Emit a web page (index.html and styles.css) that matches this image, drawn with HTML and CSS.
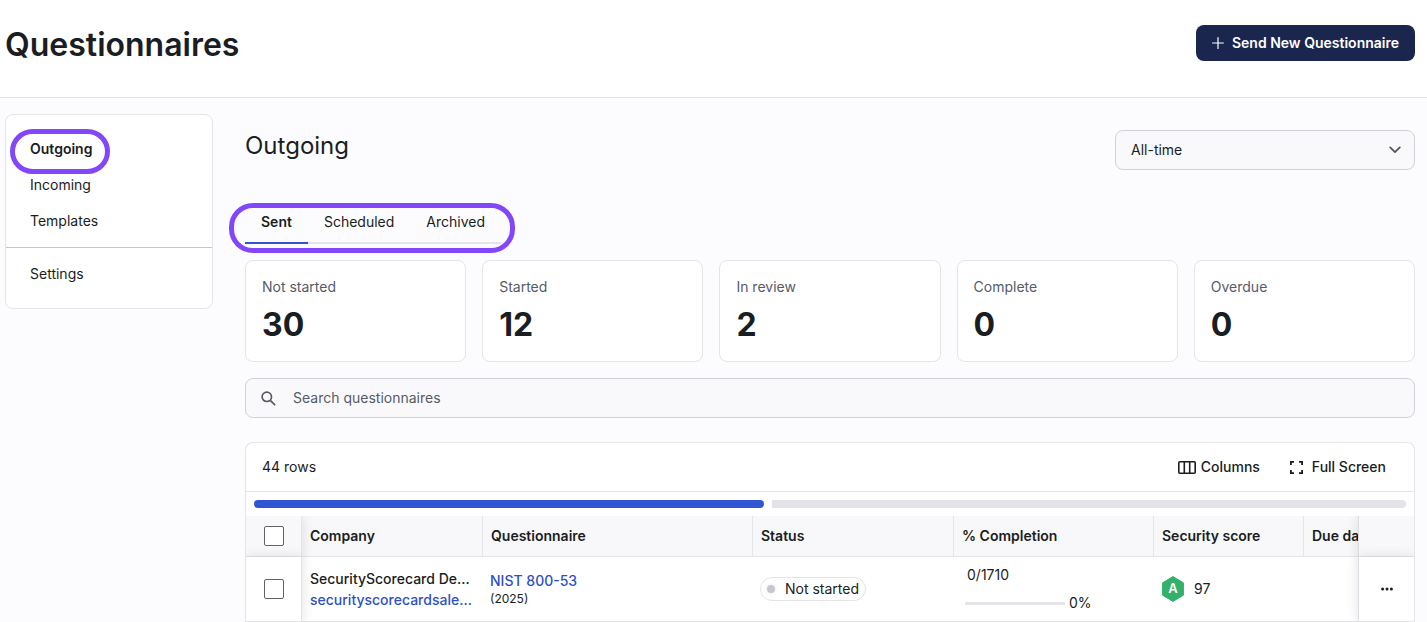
FILE: index.html
```
<!DOCTYPE html>
<html lang="en">
<head>
    <meta charset="UTF-8">
    <meta name="viewport" content="width=device-width, initial-scale=1.0">
    <title>Questionnaires</title>
    <link rel="stylesheet" href="styles.css">
</head>
<body>
    <header class="page-header">
        <h1>Questionnaires</h1>
        <button type="button" class="primary-button">
            <svg width="12" height="12" viewBox="0 0 12 12" fill="none" stroke="currentColor" stroke-width="1.2" stroke-linecap="round" aria-hidden="true"><path d="M6 .6v10.8M.6 6h10.8"/></svg>
            Send New Questionnaire
        </button>
    </header>

    <div class="layout">
        <nav class="sidebar" aria-label="Questionnaires">
            <div class="sidebar-group">
                <a href="#outgoing" class="active">Outgoing<span class="ring ring-link"></span></a>
                <a href="#incoming">Incoming</a>
                <a href="#templates">Templates</a>
            </div>
            <div class="sidebar-group">
                <a href="#settings">Settings</a>
            </div>
        </nav>

        <main class="content">
            <div class="content-header">
                <h2>Outgoing</h2>
                <div class="select-box">
                    <select aria-label="Time range">
                        <option>All-time</option>
                    </select>
                    <svg width="12" height="8" viewBox="0 0 12 8" fill="none" stroke="currentColor" stroke-width="1.7" stroke-linecap="round" stroke-linejoin="round" aria-hidden="true"><path d="M1.2 1.4 6 6.2l4.8-4.8"/></svg>
                </div>
            </div>

            <div class="tabs" role="tablist">
                <button type="button" role="tab" aria-selected="true" class="tab active">Sent</button>
                <button type="button" role="tab" aria-selected="false" class="tab">Scheduled</button>
                <button type="button" role="tab" aria-selected="false" class="tab">Archived</button>
                <span class="ring ring-tabs"></span>
            </div>

            <div class="stats">
                <div class="stat"><span>Not started</span><strong>30</strong></div>
                <div class="stat"><span>Started</span><strong>12</strong></div>
                <div class="stat"><span>In review</span><strong>2</strong></div>
                <div class="stat"><span>Complete</span><strong>0</strong></div>
                <div class="stat"><span>Overdue</span><strong>0</strong></div>
            </div>

            <div class="search">
                <svg width="15" height="15" viewBox="0 0 15 15" fill="none" stroke="currentColor" stroke-width="1.7" aria-hidden="true"><circle cx="5.8" cy="5.8" r="4.7"/><path d="m9.3 9.3 4.8 4.8"/></svg>
                <input type="text" placeholder="Search questionnaires" aria-label="Search questionnaires">
            </div>

            <section class="table-card">
                <div class="toolbar">
                    <span>44 rows</span>
                    <div class="toolbar-actions">
                        <button type="button">
                            <svg width="18" height="13" viewBox="0 0 18 13" fill="none" stroke="currentColor" stroke-width="1.6" aria-hidden="true"><rect x=".8" y=".8" width="16.4" height="11.4" rx="1"/><path d="M6.3 1v11M11.7 1v11"/></svg>
                            Columns
                        </button>
                        <button type="button" class="full-screen">
                            <svg width="13" height="13" viewBox="0 0 13 13" fill="none" stroke="currentColor" stroke-width="1.8" aria-hidden="true"><path d="M.9 4V.9H4M9 .9h3.1V4M12.1 9v3.1H9M4 12.1H.9V9"/></svg>
                            Full Screen
                        </button>
                    </div>
                </div>

                <div class="scroll-track">
                    <div class="scroll-thumb"></div>
                    <div class="scroll-rest"></div>
                </div>

                <div class="table-scroll">
                    <table>
                        <colgroup>
                            <col class="col-check">
                            <col class="col-company">
                            <col class="col-questionnaire">
                            <col class="col-status">
                            <col class="col-completion">
                            <col class="col-score">
                            <col class="col-due">
                            <col class="col-menu">
                        </colgroup>
                        <thead>
                            <tr>
                                <th class="sticky-left"><input type="checkbox" aria-label="Select all rows"></th>
                                <th>Company</th>
                                <th>Questionnaire</th>
                                <th>Status</th>
                                <th>% Completion</th>
                                <th>Security score</th>
                                <th>Due date</th>
                                <th class="sticky-right"></th>
                            </tr>
                        </thead>
                        <tbody>
                            <tr>
                                <td class="sticky-left"><input type="checkbox" aria-label="Select row"></td>
                                <td>
                                    <div class="company">SecurityScorecard Demo</div>
                                    <a href="#company" class="domain">securityscorecardsales.com</a>
                                </td>
                                <td>
                                    <a href="#questionnaire" class="questionnaire">NIST 800-53</a>
                                    <div class="year">(2025)</div>
                                </td>
                                <td><span class="status"><span class="dot"></span>Not started</span></td>
                                <td class="completion">
                                    <div class="count">0/1710</div>
                                    <div class="progress"><span class="bar"></span>0%</div>
                                </td>
                                <td>
                                    <div class="score">
                                        <svg width="22" height="26" viewBox="0 0 22 26" aria-hidden="true">
                                            <path d="M11 .6 21.4 6.8v12.4L11 25.4.6 19.2V6.8z" fill="#33b06b" stroke="#33b06b" stroke-width="1" stroke-linejoin="round"/>
                                            <text x="11" y="17.4" class="grade">A</text>
                                        </svg>
                                        97
                                    </div>
                                </td>
                                <td></td>
                                <td class="sticky-right">
                                    <button type="button" class="menu-button" aria-label="More actions">
                                        <svg width="12" height="4" viewBox="0 0 12 4" fill="currentColor" aria-hidden="true"><circle cx="1.6" cy="2" r="1.5"/><circle cx="6" cy="2" r="1.5"/><circle cx="10.4" cy="2" r="1.5"/></svg>
                                    </button>
                                </td>
                            </tr>
                        </tbody>
                    </table>
                </div>
            </section>
        </main>
    </div>
</body>
</html>
```
FILE: styles.css
```
* {
    box-sizing: border-box;
}

body {
    margin: 0;
    font-family: Inter, "Liberation Sans", sans-serif;
    font-size: 14px;
    line-height: 20px;
    color: #1a1d21;
    background-color: #fcfcfe;
}

button,
input,
select {
    font: inherit;
    color: inherit;
}

button {
    cursor: pointer;
}

a {
    color: #2f50c4;
    text-decoration: none;
}

h1,
h2 {
    margin: 0;
}

/* Header */
.page-header {
    display: flex;
    justify-content: space-between;
    align-items: flex-start;
    padding: 25px 12px 32px 5px;
    background-color: white;
    border-bottom: 1px solid #e2e2e8;
}

.page-header h1 {
    font-size: 32px;
    line-height: 40px;
    font-weight: 600;
}

.primary-button {
    display: flex;
    align-items: center;
    gap: 8px;
    height: 36px;
    padding: 0 16px;
    border: none;
    border-radius: 8px;
    background-color: #1b264f;
    color: white;
    font-weight: 600;
}

/* Sidebar */
.layout {
    display: flex;
    align-items: flex-start;
    gap: 32px;
    padding: 16px 12px 0 5px;
}

.sidebar {
    flex: 0 0 208px;
    background-color: white;
    border: 1px solid #e4e4e9;
    border-radius: 8px;
}

.sidebar-group {
    display: flex;
    flex-direction: column;
    padding: 16px 0 8px;
}

.sidebar-group + .sidebar-group {
    padding: 8px 0 16px;
    border-top: 1px solid #c4c4cc;
}

.sidebar a {
    position: relative;
    padding: 8px 24px;
    color: #1a1d21;
}

.sidebar a.active {
    font-weight: 600;
}

.ring {
    position: absolute;
    border: 5px solid #8347fb;
    border-radius: 24px;
    pointer-events: none;
}

.ring-link {
    top: -2px;
    left: 4px;
    width: 100px;
    height: 45px;
}

.ring-tabs {
    top: -7px;
    left: -16px;
    right: -14px;
    bottom: -11px;
}

/* Content */
.content {
    flex: 1;
    min-width: 0;
    padding-top: 16px;
}

.content-header {
    display: flex;
    justify-content: space-between;
    align-items: flex-start;
}

.content-header h2 {
    font-size: 24px;
    line-height: 32px;
    font-weight: 400;
}

.select-box {
    position: relative;
    width: 300px;
}

.select-box select {
    display: block;
    width: 100%;
    height: 40px;
    padding: 0 15px;
    appearance: none;
    border: 1px solid #d0d0d9;
    border-radius: 8px;
    background-color: #f9f9fc;
}

.select-box svg {
    position: absolute;
    top: 16px;
    right: 14px;
    color: #4d5361;
    pointer-events: none;
}

.tabs {
    position: relative;
    display: flex;
    width: max-content;
    margin: 40px 0 16px;
    border-bottom: 2px solid #e4e4e9;
}

.tab {
    margin-bottom: -2px;
    padding: 2px 16px 10px;
    border: none;
    border-bottom: 2px solid transparent;
    background: none;
}

.tab.active {
    border-bottom-color: #3055d4;
    font-weight: 600;
}

.stats {
    display: grid;
    grid-template-columns: repeat(5, 1fr);
    gap: 16px;
}

.stat {
    display: flex;
    flex-direction: column;
    gap: 8px;
    padding: 16px;
    background-color: white;
    border: 1px solid #e4e4e9;
    border-radius: 8px;
}

.stat span {
    color: #565b66;
}

.stat strong {
    font-size: 32px;
    line-height: 40px;
    font-weight: 700;
}

.search {
    display: flex;
    align-items: center;
    gap: 15px;
    height: 40px;
    margin: 16px 0 24px;
    padding: 0 15px;
    border: 1px solid #d0d0d9;
    border-radius: 8px;
    background-color: #f9f9fc;
    color: #565b66;
}

.search input {
    flex: 1;
    border: none;
    outline: none;
    background: none;
}

.search input::placeholder {
    color: #565b66;
    opacity: 1;
}

/* Table */
.table-card {
    background-color: white;
    border: 1px solid #e4e4e9;
    border-bottom: none;
    border-radius: 8px 8px 0 0;
}

.toolbar {
    display: flex;
    justify-content: space-between;
    align-items: center;
    height: 49px;
    padding: 0 28px 0 16px;
    border-bottom: 1px solid #e4e4e9;
}

.toolbar-actions {
    display: flex;
    gap: 30px;
}

.toolbar-actions button {
    display: flex;
    align-items: center;
    gap: 5px;
    padding: 0;
    border: none;
    background: none;
    font-weight: 500;
}

.toolbar-actions .full-screen {
    gap: 9px;
}

.scroll-track {
    display: flex;
    gap: 8px;
    padding: 8px;
}

.scroll-thumb,
.scroll-rest {
    height: 8px;
}

.scroll-thumb {
    flex: 510;
    border-radius: 4px;
    background-color: #3055d4;
}

.scroll-rest {
    flex: 634;
    border-radius: 0 4px 4px 0;
    background-color: #e3e3e8;
}

.table-scroll {
    overflow-x: auto;
    scrollbar-width: none;
}

table {
    width: 2620px;
    table-layout: fixed;
    border-collapse: separate;
    border-spacing: 0;
}

.col-check,
.col-menu {
    width: 56px;
}

.col-company {
    width: 181px;
}

.col-questionnaire {
    width: 270px;
}

.col-status {
    width: 201px;
}

.col-completion {
    width: 200px;
}

.col-score {
    width: 150px;
}

th,
td {
    padding: 0 8px;
    border-bottom: 1px solid #e4e4e9;
    text-align: left;
    vertical-align: middle;
}

th {
    height: 41px;
    border-right: 1px solid #e4e4e9;
    background-color: #f8f8fa;
    font-weight: 600;
}

td {
    height: 65px;
    padding: 0 7px;
    background-color: white;
}

.sticky-left,
.sticky-right {
    position: sticky;
    z-index: 1;
    box-shadow: 0 0 12px rgba(0, 0, 0, 0.12);
}

.sticky-left {
    left: 0;
    border-right: 1px solid #e4e4e9;
}

.sticky-right {
    right: 0;
    border-left: 1px solid #dcdce2;
    border-right: none;
}

input[type="checkbox"] {
    display: block;
    width: 20px;
    height: 20px;
    margin: 0 auto;
    appearance: none;
    border: 1px solid #5f6368;
    border-radius: 2px;
    background-color: white;
}

.company,
.domain {
    display: block;
    overflow: hidden;
    margin-left: 1px;
    width: 164px;
    line-height: 21px;
    font-weight: 500;
    text-overflow: ellipsis;
    white-space: nowrap;
}

.questionnaire {
    display: block;
    font-weight: 500;
}

.year {
    font-size: 12px;
    line-height: 16px;
}

.status {
    display: inline-flex;
    align-items: center;
    gap: 10px;
    height: 24px;
    padding: 0 6px;
    border: 1px solid #e4e4e9;
    border-radius: 12px;
}

.dot {
    width: 8px;
    height: 8px;
    border-radius: 50%;
    background-color: #c6c6d2;
    box-shadow: 0 0 4px rgba(0, 0, 0, 0.1);
}

.completion {
    padding-left: 11px;
}

.count {
    padding-left: 2px;
    margin-bottom: 8px;
}

.progress {
    display: flex;
    align-items: center;
    gap: 4px;
}

.bar {
    width: 100px;
    height: 3px;
    border-radius: 1px;
    background-color: #e3e3e8;
}

.score {
    display: flex;
    align-items: center;
    gap: 10px;
    padding-left: 1px;
}

.grade {
    fill: white;
    font-size: 13px;
    font-weight: 600;
    text-anchor: middle;
}

.menu-button {
    display: flex;
    margin: 0 auto;
    padding: 8px;
    border: none;
    background: none;
}
```
